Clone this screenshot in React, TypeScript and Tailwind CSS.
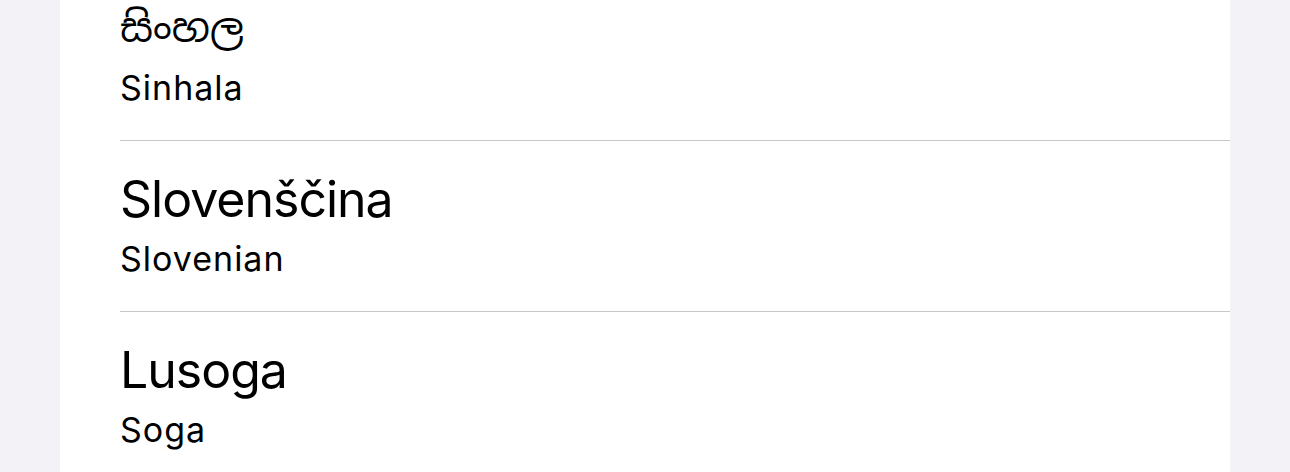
const languages = [
  { native: "සිංහල", english: "Sinhala", nativeSize: "text-[40px]" },
  { native: "Slovenščina", english: "Slovenian", nativeSize: "text-[50px] tracking-[-1px]" },
  { native: "Lusoga", english: "Soga", nativeSize: "text-[50px] tracking-[-1px]" },
];

export default function App() {
  return (
    <div
      className="h-[472px] w-full overflow-hidden bg-[#f2f2f7] px-[60px]"
      style={{ fontFamily: "Inter, 'Noto Sans', 'Noto Sans Sinhala', sans-serif" }}
    >
      <div className="-mt-[30px] h-[532px] bg-white pl-[60px]">
        {languages.map((lang, i) => (
          <div
            key={lang.english}
            className={`flex h-[171px] flex-col pt-[27px] ${i < languages.length - 1 ? "border-b border-[#c6c6c8]" : ""}`}
          >
            <div className={`${lang.nativeSize} leading-[62px] text-black`}>{lang.native}</div>
            <div className="mt-[9px] text-[34px] leading-[40px] tracking-[1px] text-black">{lang.english}</div>
          </div>
        ))}
      </div>
    </div>
  );
}
